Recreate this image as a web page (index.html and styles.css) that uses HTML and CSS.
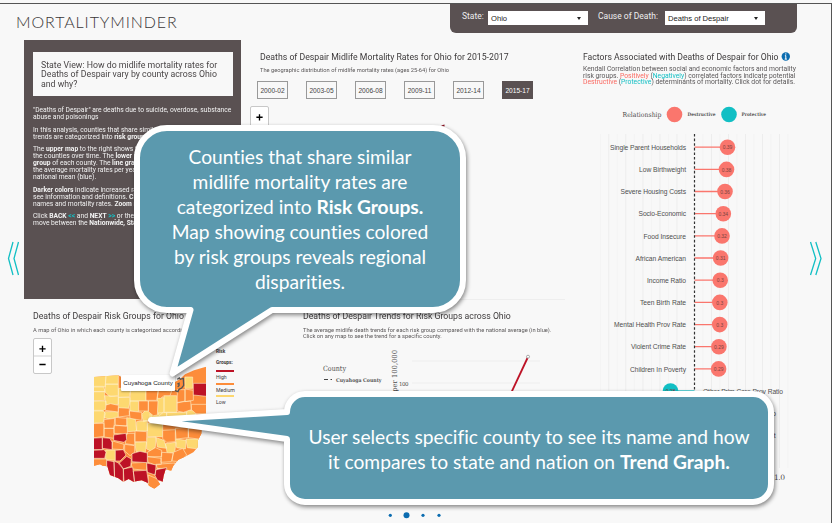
FILE: index.html
```html
<!DOCTYPE html>
<html lang="en">
<head>
<meta charset="utf-8">
<title>MortalityMinder</title>
<link rel="stylesheet" href="styles.css">
</head>
<body>
<div class="page">
  <header class="top">
    <div class="logo">MORTALITYMINDER</div>
    <div class="filters">
      <label class="flabel f-state">State:</label>
      <div class="select"><span>Ohio</span><i class="caret"></i></div>
      <label class="flabel f-cause">Cause of Death:</label>
      <div class="select"><span>Deaths of Despair</span><i class="caret"></i></div>
    </div>
  </header>

  <main class="content">
    <div class="left">
      <div class="upper">
        <section class="intro">
          <div class="question"><p class="sx">State View: How do midlife mortality rates for<br>Deaths of Despair vary by county across Ohio<br>and why?</p></div>
          <div class="intro-text">
            <p class="sx">"Deaths of Despair" are deaths due to suicide, overdose, substance<br>abuse and poisonings</p>
            <p class="sx">In this analysis, counties that share similar mortality<br>trends are categorized into <b>risk groups</b>.</p>
            <p class="sx">The <b>upper map</b> to the right shows the rates for<br>the counties over time. The <b>lower map</b> shows<br><b>group</b> of each county. The <b>line graph</b> shows<br>the average mortality rates per year and the<br>national mean (blue).</p>
            <p class="sx"><b>Darker colors</b> indicate increased rates. Hover<br>see information and definitions. <b>Click</b> for<br>names and mortality rates. <b>Zoom</b> maps</p>
            <p class="sx">Click <b>BACK</b> <em>&lt;&lt;</em> and <b>NEXT</b> <em>&gt;&gt;</em> or the dots<br>move between the <b>Nationwide, State</b></p>
          </div>
        </section>
        <section class="rates">
          <h2 class="sx">Deaths of Despair Midlife Mortality Rates for Ohio for 2015-2017</h2>
          <p class="sub sx">The geographic distribution of midlife mortality rates (ages 25-64) for Ohio</p>
          <div class="years"><span>2000-02</span><span>2003-05</span><span>2006-08</span><span>2009-11</span><span>2012-14</span><span class="on">2015-17</span></div>
          <div class="zoombox"><svg viewBox="0 0 19 36"><path d="M6 10.500h7M9.500 7v7"/></svg></div>
        </section>
      </div>
      <div class="lower">
        <section class="risk">
          <h2 class="sx">Deaths of Despair Risk Groups for Ohio</h2>
          <p class="sub sx">A map of Ohio in which each county is categorized according</p>
          <div class="mapwrap">
            <div class="zoombox"><svg viewBox="0 0 19 36"><path class="rule" d="M0 18h19"/><path d="M6 10h7M9.500 6.500v7M6 27.500h7"/></svg></div>
            <svg class="map" viewBox="0 0 540 405">
              <defs><clipPath id="state"><path d="M72 36L145 31L175 50L215 62L262 65L300 60L330 42L345 28L372 16L408 5V160L396 178L394 206L384 226L383 247L370 262L345 275L325 284L310 302L303 318L287 312L281 332L278 350L262 345L270 358L253 371L237 362L232 353L215 346L190 350L176 342L160 350L145 340L120 330L112 304L98 302L90 298L72 302Z"/></clipPath></defs>
              <g clip-path="url(#state)" class="counties">
                <path class="md" d="M60 0H420V390H60Z"/>
                <path class="lo" d="M60 30H108L106 66H60ZM108 30H146L145 58H106ZM60 64H100L106 80H60ZM106 57H145V92L120 95L104 80ZM145 68L182 74L178 96L145 97ZM182 72H228V108H180ZM60 80H104V106L60 108ZM104 92L145 94V118L108 120ZM145 97H180V110L176 130H145ZM180 108H206V140L180 138ZM60 108H108V130L98 138H60ZM60 136H98L106 145L100 172L60 176ZM104 140H145V156L120 162L102 158ZM262 98H282V140L268 152L262 140ZM282 92H320V142H282ZM215 148L228 135L244 138V165L220 170ZM345 36H368V70H345ZM170 158L196 162L200 198L172 200ZM200 170L232 166V198H200ZM232 175L278 174V215H232ZM240 146L290 142V170L240 174ZM290 142H350V160L290 170ZM350 136H378V170H350ZM195 232L230 230L226 262L198 260ZM230 218L258 216L256 245L246 260L230 252ZM258 218L282 226L290 250L262 246ZM286 236L318 232L314 262L292 266ZM316 222L348 226L346 252L320 248ZM348 222H388V252L352 248ZM107 255H136V286L107 284Z"/>
                <path class="md" d="M145 28H180V70H145ZM228 75H265L260 106H228ZM265 75L305 78L300 92L282 92L272 100H262ZM322 74H345V108L322 114ZM345 72L370 76V106L345 110ZM206 108H235V138H206ZM235 108H264L262 150L250 152L235 140ZM108 120L122 116L145 121V141L106 136ZM145 128L178 130V152L145 156ZM178 138L215 142V166L180 160ZM322 112L362 108L364 134L340 142L322 138ZM364 118H410V146H378L364 134ZM102 164L134 160L132 190H102ZM136 157L170 160V184L136 180ZM132 182H172V208L132 205ZM60 176L102 175V214L60 220ZM102 190H132V220L102 216ZM278 196L316 194V230L290 232L278 220ZM316 190L355 186V218L318 222ZM355 190H400V224L355 218ZM195 198L230 200V230H195ZM170 205H194V240L166 236ZM128 228L162 238L160 254L126 252ZM164 238L194 242V262L180 272L164 258ZM232 262L256 248L275 256V275H232ZM275 262L310 264L304 290L272 292ZM310 262L338 250L350 270L330 290L306 288ZM60 282H110V310H60ZM184 294L230 292V316L186 312ZM232 275L274 280V298L256 300L234 292ZM258 298L315 294V320L262 310ZM235 330L272 346V380H232ZM262 310H290V325L262 328Z"/>
                <path class="hi" d="M370 55H410V94L370 90ZM60 220L97 218V254H60ZM97 218L120 220L126 232V254L97 250ZM131 210L168 205L170 224L162 232L131 226ZM60 256L102 254L108 262L104 280H60ZM136 256L160 254L168 270L150 288H136ZM186 266L210 259L232 264V293L186 290ZM110 286L132 290L134 340H110ZM132 288L150 296L160 312V352H134ZM146 296L170 274L184 282L182 304L160 312ZM160 312L188 306L194 352H162ZM190 318L230 316L236 355H194ZM230 294L258 300L256 330L232 322ZM258 314L290 308V356L262 345L254 330Z"/>
              </g>
              <path class="picked" d="M322 43l6-4 3 4 9-3 1 21-6 8-8 4-3 7-9-3M322 57l5-2v7l-4 3"/>
            </svg>
            <div class="tip">Cuyahoga County</div>
            <div class="legend">
              <b>Risk</b><b>Groups:</b>
              <i class="bar hi-bg"></i><span>High</span>
              <i class="bar md-bg"></i><span>Medium</span>
              <i class="bar lo-bg"></i><span>Low</span>
            </div>
          </div>
        </section>
        <section class="trends">
          <h2 class="sx">Deaths of Despair Trends for Risk Groups across Ohio</h2>
          <p class="sub sx">The average midlife death trends for each risk group compared with the national average (in blue).<br>Click on any map to see the trend for a specific county.</p>
          <svg class="trend-chart" viewBox="303 342 260 80">
            <path class="grid" d="M412 361H540M412 383H540"/>
            <g class="serif">
              <text x="323" y="370.500" font-size="7.200" textLength="23" lengthAdjust="spacingAndGlyphs">County</text>
              <path class="dash" d="M324 379.500h4M330.500 379.500h1.500"/>
              <text x="336" y="381.800" font-size="5.200" textLength="45.500" lengthAdjust="spacingAndGlyphs" class="strong">Cuyahoga County</text>
              <text transform="translate(396.500 350) rotate(-90)" text-anchor="end" font-size="7" textLength="68" lengthAdjust="spacingAndGlyphs">Deaths per 100,000</text>
              <text x="399" y="385.500" font-size="5.500" textLength="9.500">100</text>
            </g>
            <path class="redline" d="M527.500 358L505 406"/>
            <circle cx="528" cy="356.700" r="1.500" class="pt"/>
          </svg>
        </section>
      </div>
    </div>

    <section class="factors">
      <h2 class="sx fh">Factors Associated with Deaths of Despair for Ohio</h2>
      <p class="fsub sx">Kendall Correlation between social and economic factors and mortality<br>risk groups. <span class="red">Positively</span> (<span class="teal">Negatively</span>) correlated factors indicate potential<br><span class="red">Destructive</span> (<span class="teal">Protective</span>) determinants of mortality. Click dot for details.</p>
      <svg class="chart" viewBox="583 96 240 400">
        <path class="vgrid" d="M608.800 134V468M625.800 134V468M643 134V468M660 134V468M677 134V468M711.500 134V468M728.500 134V468M745.500 134V468M762.500 134V468M779.500 134V468"/>
        <path class="vgrid minor" d="M600.500 134V468M617.300 134V468M634.400 134V468M651.500 134V468M668.500 134V468M685.700 134V468M703 134V468M720 134V468M737 134V468M754 134V468M771 134V468M788 134V468"/>
        <g class="serif">
          <text x="622.500" y="117" font-size="6.800" textLength="39" lengthAdjust="spacingAndGlyphs">Relationship</text>
          <text x="687.500" y="116.300" font-size="4.800" textLength="28" lengthAdjust="spacingAndGlyphs" class="strong">Destructive</text>
          <text x="741.500" y="116.300" font-size="4.800" textLength="24.500" lengthAdjust="spacingAndGlyphs" class="strong">Protective</text>
          <text x="774" y="479.500" font-size="7.500" textLength="11">1.0</text>
        </g>
        <circle class="d" cx="674.500" cy="114.500" r="7.800"/><circle class="p" cx="729" cy="114.500" r="7.800"/>
        <path class="stem" d="M694.500 147.200H727M694.500 169.400H726M694.500 191.500H725M694.500 213.700H723M694.500 235.900H722M694.500 258H720M694.500 280.200H720M694.500 302.400H719M694.500 324.600H719M694.500 346.700H718M694.500 368.900H718"/>
        <path class="stem tealstem" d="M694.500 391H670"/>
        <path class="zero" d="M694.500 134V468"/>
        <g class="d">
          <circle cx="727.500" cy="147.200" r="7.800"/><circle cx="726.500" cy="169.400" r="7.800"/><circle cx="725" cy="191.500" r="7.800"/><circle cx="723.300" cy="213.700" r="7.800"/><circle cx="722" cy="235.900" r="7.800"/><circle cx="720.600" cy="258" r="7.800"/><circle cx="720.200" cy="280.200" r="7.800"/><circle cx="719.800" cy="302.400" r="7.800"/><circle cx="719.700" cy="324.600" r="7.800"/><circle cx="718.900" cy="346.700" r="7.800"/><circle cx="718.600" cy="368.900" r="7.800"/>
        </g>
        <circle class="p" cx="670.500" cy="391" r="7.800"/>
        <g class="val">
          <text x="727.500" y="149.300">0.39</text><text x="726.500" y="171.500">0.38</text><text x="725" y="193.600">0.36</text><text x="723.300" y="215.800">0.34</text><text x="722" y="238">0.32</text><text x="720.600" y="260.100">0.31</text><text x="720.200" y="282.300">0.3</text><text x="719.800" y="304.500">0.3</text><text x="719.700" y="326.700">0.3</text><text x="718.900" y="348.800">0.29</text><text x="718.600" y="371">0.29</text><text x="670.500" y="393">0.28</text>
        </g>
        <g class="lab">
          <text x="610" y="149.800" textLength="76">Single Parent Households</text>
          <text x="639" y="172" textLength="47">Low Birthweight</text>
          <text x="620.500" y="194.100" textLength="65.500">Severe Housing Costs</text>
          <text x="638.500" y="216.300" textLength="47.500">Socio-Economic</text>
          <text x="643.500" y="238.500" textLength="42.500">Food Insecure</text>
          <text x="635.500" y="260.600" textLength="50.500">African American</text>
          <text x="647" y="282.800" textLength="39">Income Ratio</text>
          <text x="640" y="305" textLength="46">Teen Birth Rate</text>
          <text x="614" y="327.200" textLength="72">Mental Health Prov Rate</text>
          <text x="631" y="349.300" textLength="55">Violent Crime Rate</text>
          <text x="630" y="371.500" textLength="56">Children In Poverty</text>
          <text x="703" y="393.800" textLength="80">Other Prim Care Prov Ratio</text>
          <text x="776" y="415.500" text-anchor="end">o</text>
          <text x="775.500" y="438" text-anchor="end">t</text>
        </g>
      </svg>
    </section>
  </main>

  <svg class="overlay" viewBox="0 0 832 523">
    <circle cx="785.800" cy="56.500" r="4.200" class="info"/><path class="info-i" d="M785.800 53.300v1.300M785.800 55.600v3.500M784.900 55.700h1M784.700 59.100h2.200"/>
    <path class="chev" d="M13 242L8.500 258.500L13 275M18.500 242L14 258.500L18.500 275M810.500 242L815.700 258.500L810.500 275M815.800 242L821 258.500L815.800 275"/>
    <path d="M441 125.500l3.500-1v2z" fill="#8a1020"/>
    <g class="dots"><circle cx="390.300" cy="515.300" r="1.600"/><circle cx="406.500" cy="515.300" r="3"/><circle cx="423" cy="515.300" r="1.600"/><circle cx="439" cy="515.300" r="1.600"/></g>
    <path class="bubble" d="M167 128H433A30 30 0 0 1 463 158V280A30 30 0 0 1 433 310H272L172.500 373.500L190.500 310H167A30 30 0 0 1 137 280V158A30 30 0 0 1 167 128Z"/>
    <path class="bubble" d="M305 394H753A18 18 0 0 1 771 412V484A18 18 0 0 1 753 502H305A18 18 0 0 1 287 484V439L151 420L287 412A18 18 0 0 1 305 394Z"/>
  </svg>
  <div class="say say-one"><p>Counties that share similar<br>midlife mortality rates are<br>categorized into <b>Risk Groups.</b><br>Map showing counties colored<br>by risk groups reveals regional<br>disparities.</p></div>
  <div class="say say-two"><p>User selects specific county to see its name and how<br>it compares to state and nation on <b>Trend Graph.</b></p></div>
</div>
</body>
</html>
```
FILE: styles.css
```css
* { box-sizing: border-box; margin: 0; padding: 0; }
body { background: #f8f8f8; font-family: Roboto, "Liberation Sans", sans-serif; color: #3d3a3b; }
svg { display: block; }
.page { position: relative; width: 832px; height: 523px; overflow: hidden; background: #f8f8f8; }
.page::before { content: ""; position: absolute; top: 3px; left: 0; width: 831px; height: 530px; border: 1px solid #555; border-left: 0; }
.sx { white-space: nowrap; transform-origin: left top; width: max-content; }

.top { height: 40px; padding: 4px 35px 0 16px; display: flex; justify-content: space-between; }
.logo { font: 300 16px/20px Lato, sans-serif; letter-spacing: .9px; color: #3a3637; padding-top: 8px; white-space: nowrap; }
.filters { display: flex; width: 347px; height: 29px; background: #5a5152; border-radius: 0 0 6px 6px; padding: 7px 0 0 12px; }
.flabel { color: #eee; font-size: 8.5px; line-height: 11px; white-space: nowrap; }
.f-state { width: 26px; }
.f-cause { width: 67px; margin-left: 10px; }
.select { width: 100px; height: 14px; background: #fff; display: flex; justify-content: space-between; align-items: center; padding: 1px 7px 0 3px; font: 7.6px/13px "Liberation Sans", sans-serif; color: #222; }
.caret { border: 2px solid transparent; border-top: 3px solid #222; border-bottom: 0; }

.content { display: grid; grid-template-columns: 583px 1fr; }
.upper { display: flex; height: 259px; padding-left: 24px; }
.intro { width: 217px; background: #5a5152; padding: 12px 8px 0 9px; }
.question { background: #f8f8f8; height: 44px; padding: 8px; font-size: 9.3px; line-height: 9.3px; color: #4a4647; }
.question .sx { transform: scaleX(.942); }
.intro-text { padding-top: 10px; color: #f2f2f2; font-size: 7.2px; line-height: 7px; }
.intro-text p { margin-bottom: 5.6px; transform: scaleX(.934); }
.intro-text em { color: #12bfc4; font-style: normal; font-weight: 700; }

h2 { font-weight: 400; font-size: 9.6px; line-height: 12px; }
h2.sx { transform: scaleX(.908); }
h2.fh { transform: scaleX(.898); }
.sub { font-size: 6.2px; line-height: 6px; color: #5a5758; transform: scaleX(.926); }
.rates { padding: 11px 0 0 8px; }
.rates h2, .rates .sub { margin-left: 11px; }
.rates .sub { margin-top: 4px; }
.years { display: flex; gap: 18px; margin: 8px 0 0 8px; }
.years span { width: 31px; height: 18px; border: 1px solid #999; font: 6.6px/17px "Liberation Sans", sans-serif; text-align: center; color: #444; }
.years .on { background: #5a5152; border-color: #5a5152; color: #fff; }
.zoombox { width: 19px; height: 36px; background: #fff; border: 1px solid #c8c8c8; border-radius: 2px; overflow: hidden; }
.zoombox svg { width: 17px; height: 34px; }
.zoombox path { stroke: #000; stroke-width: 1.5; fill: none; }
.zoombox .rule { stroke: #ccc; stroke-width: 1; }
.rates .zoombox { margin: 7px 0 0 1px; }

.lower { display: flex; height: 224px; padding-left: 33px; }
.risk { width: 257px; padding-top: 11px; }
.lower .sub { margin-top: 5px; }
.trends { width: 275px; margin-left: 0; padding: 10px 0 0 13px; border-top: 1px solid #eee; }
.mapwrap { position: relative; padding-top: 5px; height: 185px; }
.map { position: absolute; left: 37px; top: 32px; width: 180px; height: 135px; }
.counties path { stroke: #fff0c8; stroke-width: 1.8; stroke-linejoin: round; }
.lo { fill: #fdd870; } .md { fill: #fd8d3a; } .hi { fill: #bd1226; }
.picked { fill: none; stroke: #555; stroke-width: 4; }
.tip { position: absolute; left: 88px; top: 42px; width: 54px; height: 16px; background: #fff; border-radius: 1px; box-shadow: 0 1px 2px #0005; font: 6.2px/16px "Liberation Sans", sans-serif; color: #222; text-align: center; white-space: nowrap; }
.legend { position: absolute; left: 183px; top: 14px; width: 30px; font-size: 5.2px; display: flex; flex-direction: column; line-height: 6px; }
.legend b { margin: 2px 0 2.5px; font-size: 4.8px; }
.legend .bar { width: 18px; height: 2px; margin-top: 2px; }
.legend span { margin: 2px 0 .7px; height: 6px; line-height: 6px; }
.hi-bg { background: #bd1226; } .md-bg { background: #fd8d3a; } .lo-bg { background: #fdd870; }
.trend-chart { width: 260px; height: 80px; margin-top: 2.7px; }
.grid { stroke: #ebebeb; stroke-width: .7; }
.serif { font-family: "DejaVu Serif", serif; fill: #4c4c4c; }
.strong { font-weight: 700; fill: #555; }
.dash { stroke: #444; stroke-width: 1.2; }
.redline { stroke: #bd1226; stroke-width: 1.8; }
.pt { fill: #fff; stroke: #777; stroke-width: .6; }

.factors { padding-top: 11px; }
.fsub { font-size: 7.2px; line-height: 6.7px; color: #5a5758; margin-top: 3px; height: 30px; transform: scaleX(.942); }
.red { color: #fa6a62; } .teal { color: #12bfc4; }
.chart { width: 240px; height: 400px; }
.vgrid { stroke: #ededed; stroke-width: 1; }
.minor { stroke: #f2f2f2; stroke-width: .7; }
.d { fill: #fa766d; } .p { fill: #12bfc4; }
.stem { stroke: #fa766d; stroke-width: 1.3; }
.tealstem { stroke: #12bfc4; }
.zero { stroke: #333; stroke-width: 1.2; stroke-dasharray: 2.6 2; }
.val { font: 5px "Liberation Sans", sans-serif; fill: #7a4440; text-anchor: middle; }
.lab { font: 6.7px "Liberation Sans", sans-serif; fill: #4f4f4f; }

.overlay { position: absolute; left: 0; top: 0; width: 832px; height: 523px; }
.info, .dots { fill: #0b6cb0; }
.info-i { stroke: #fff; stroke-width: 1; }
.chev { fill: none; stroke: #12bfc4; stroke-width: 1.3; }
.bubble { fill: #5b99ae; stroke: #fff; stroke-width: 6; stroke-linejoin: round; filter: drop-shadow(1px 2px 2px #0007); }
.say { position: absolute; display: flex; justify-content: center; color: #fff; font: 19.2px/25px Lato, sans-serif; font-variant-ligatures: none; text-align: center; white-space: nowrap; }
.say-one { left: 138px; top: 144px; width: 324px; }
.say-two { left: 290px; top: 423.5px; width: 478px; }
```
